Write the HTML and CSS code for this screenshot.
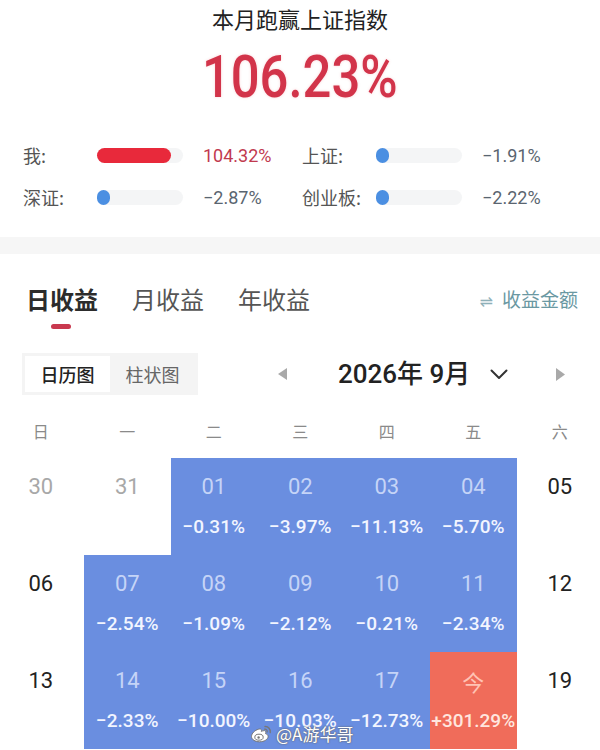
FILE: index.html
```html
<!DOCTYPE html>
<html lang="zh-CN">
<head>
<meta charset="utf-8">
<title>本月跑赢上证指数</title>
<link rel="stylesheet" href="styles.css">
</head>
<body>
<div class="summary">
  <div class="title">本月跑赢上证指数</div>
  <div class="big"><span>106.23%</span></div>
  <div class="stats">
    <div class="stat"><span class="label">我:</span><span class="track"><span class="fill red" style="width:74px"></span></span><span class="value up">104.32%</span></div>
    <div class="stat"><span class="label">上证:</span><span class="track"><span class="fill blue" style="width:13px"></span></span><span class="value">−1.91%</span></div>
    <div class="stat"><span class="label">深证:</span><span class="track"><span class="fill blue" style="width:13px"></span></span><span class="value">−2.87%</span></div>
    <div class="stat"><span class="label">创业板:</span><span class="track"><span class="fill blue" style="width:13px"></span></span><span class="value">−2.22%</span></div>
  </div>
</div>
<div class="band"></div>
<div class="tabs">
  <div class="tab active">日收益<i class="indicator"></i></div>
  <div class="tab">月收益</div>
  <div class="tab">年收益</div>
  <div class="toggle"><span class="swap">⇌</span>收益金额</div>
</div>
<div class="controls">
  <div class="seg"><span class="on">日历图</span><span>柱状图</span></div>
  <div class="nav">
    <svg class="tri" width="9" height="12" viewBox="0 0 9 12"><polygon points="9,0 9,12 0,6" fill="#a9a9a9"/></svg>
    <span class="month">2026年 9月</span>
    <svg class="chev" width="18" height="11" viewBox="0 0 18 11"><polyline points="1.5,1.5 9,9 16.5,1.5" fill="none" stroke="#333" stroke-width="2" stroke-linecap="round" stroke-linejoin="round"/></svg>
    <svg class="tri right" width="9" height="13" viewBox="0 0 9 13"><polygon points="0,0 9,6.5 0,13" fill="#a9a9a9"/></svg>
  </div>
</div>
<div class="weekdays">
  <span>日</span><span>一</span><span>二</span><span>三</span><span>四</span><span>五</span><span>六</span>
</div>
<div class="cal">
  <div class="cell prev"><b>30</b></div>
  <div class="cell prev"><b>31</b></div>
  <div class="cell loss"><b>01</b><em>−0.31%</em></div>
  <div class="cell loss"><b>02</b><em>−3.97%</em></div>
  <div class="cell loss"><b>03</b><em>−11.13%</em></div>
  <div class="cell loss"><b>04</b><em>−5.70%</em></div>
  <div class="cell"><b>05</b></div>

  <div class="cell"><b>06</b></div>
  <div class="cell loss"><b>07</b><em>−2.54%</em></div>
  <div class="cell loss"><b>08</b><em>−1.09%</em></div>
  <div class="cell loss"><b>09</b><em>−2.12%</em></div>
  <div class="cell loss"><b>10</b><em>−0.21%</em></div>
  <div class="cell loss"><b>11</b><em>−2.34%</em></div>
  <div class="cell"><b>12</b></div>

  <div class="cell"><b>13</b></div>
  <div class="cell loss"><b>14</b><em>−2.33%</em></div>
  <div class="cell loss"><b>15</b><em>−10.00%</em></div>
  <div class="cell loss"><b>16</b><em>−10.03%</em></div>
  <div class="cell loss"><b>17</b><em>−12.73%</em></div>
  <div class="cell today"><b>今</b><em>+301.29%</em></div>
  <div class="cell"><b>19</b></div>
</div>
<div class="watermark">
  <svg width="22" height="18" viewBox="0 0 22 18">
    <path d="M8.5 4.2c-3.6 1-7 4.2-7 7.3 0 3 3.6 5.3 8 5.3 4.9 0 8.6-2.6 8.6-5.3 0-1.8-1.600-2.6-2.6-2.9 .5-1.2 .6-2.8-1-3-1.1-.1-2.6 .6-3.2 .8 .4-1.2 .4-3-2.8-2.2z" fill="#fff" stroke="#777" stroke-width="1"/>
    <ellipse cx="9" cy="12.2" rx="4.2" ry="3" fill="none" stroke="#777" stroke-width="1"/>
    <circle cx="8.6" cy="12.5" r="1.2" fill="#777"/>
    <path d="M15 1.5a5 5 0 0 1 5.2 6" fill="none" stroke="#777" stroke-width="1.4" stroke-linecap="round"/>
    <path d="M14.6 4.2a2.3 2.3 0 0 1 2.6 2.8" fill="none" stroke="#777" stroke-width="1.2" stroke-linecap="round"/>
  </svg>
  <span>@A游华哥</span>
</div>
</body>
</html>
```
FILE: styles.css
```css
html, body {
  margin: 0;
  padding: 0;
  overflow: hidden;
  background: #fff;
}
body {
  position: relative;
  width: 600px;
  height: 750px;
  font-family: "Roboto", "Noto Sans CJK SC", sans-serif;
  color: #222;
}
.summary {
  padding-top: 4px;
}
.title {
  text-align: center;
  font-family: "Noto Sans CJK SC", sans-serif;
  font-size: 22px;
  line-height: 28px;
  color: #222;
}
.big {
  margin-top: 10px;
  text-align: center;
  line-height: 70px;
  height: 70px;
}
.big span {
  display: inline-block;
  font-size: 59px;
  font-weight: 500;
  color: #d2344a;
  transform: scaleX(0.86);
  text-shadow: 0 0 3px rgba(230, 80, 90, 0.25);
}
.stats {
  margin-top: 22px;
  padding-left: 23px;
  display: grid;
  grid-template-columns: 279px 1fr;
}
.stat {
  display: flex;
  align-items: center;
  height: 42px;
}
.label {
  width: 74px;
  font-family: "Noto Sans CJK SC", sans-serif;
  font-size: 18px;
  color: #555;
}
.track {
  display: block;
  width: 86px;
  height: 15px;
  border-radius: 8px;
  background: #f4f5f6;
}
.fill {
  display: block;
  height: 15px;
  border-radius: 8px;
}
.fill.red { background: #e8293b; }
.fill.blue { background: #4b8fe2; }
.value {
  margin-left: 20px;
  font-size: 18px;
  color: #5a6570;
}
.value.up { color: #c13a4f; }
.band {
  margin-top: 19px;
  height: 17px;
  background: #f6f6f6;
}
.tabs {
  display: flex;
  align-items: flex-start;
  padding: 29px 22px 0 26px;
  gap: 34px;
}
.tab {
  display: flex;
  flex-direction: column;
  align-items: center;
  font-family: "Noto Sans CJK SC", sans-serif;
  font-size: 24px;
  line-height: 32px;
  color: #555;
}
.tab.active {
  font-weight: 700;
  color: #2c2c2c;
}
.indicator {
  display: block;
  width: 20px;
  height: 5px;
  margin-top: 9px;
  margin-right: 3px;
  border-radius: 3px;
  background: #c9394f;
}
.toggle {
  margin-left: auto;
  font-family: "Noto Sans CJK SC", sans-serif;
  font-size: 19px;
  line-height: 32px;
  color: #6a98a2;
}
.swap {
  font-family: "DejaVu Sans", sans-serif;
  font-size: 16px;
  margin-right: 9px;
  color: #8fb0b8;
}
.controls {
  display: flex;
  align-items: center;
  height: 42px;
  margin-top: 24px;
}
.seg {
  display: flex;
  margin-left: 22px;
  padding: 3px;
  background: #f4f4f4;
}
.seg span {
  display: flex;
  align-items: center;
  justify-content: center;
  width: 85px;
  height: 36px;
  font-family: "Noto Sans CJK SC", sans-serif;
  font-size: 18px;
  color: #666;
}
.seg span.on {
  background: #fff;
  color: #222;
  font-weight: 500;
}
.nav {
  display: flex;
  align-items: center;
  margin-left: 80px;
}
.month {
  margin-left: 51px;
  font-size: 26px;
  font-weight: 500;
  color: #222;
  line-height: 34px;
}
.chev { margin-left: 20px; }
.tri.right { margin-left: 48px; }
.weekdays, .cal {
  display: grid;
  grid-template-columns: repeat(7, 86.5px);
  margin-left: -2.5px;
  width: 605.5px;
}
.weekdays {
  padding: 24px 0 15px;
  line-height: 24px;
}
.weekdays span {
  text-align: center;
  font-family: "Noto Sans CJK SC", sans-serif;
  font-size: 16px;
  font-weight: 400;
  color: #8a8a8a;
}
.cal {
  grid-auto-rows: 97px;
}
.cell {
  display: flex;
  flex-direction: column;
  align-items: center;
  padding-top: 14px;
  box-sizing: border-box;
}
.cell b {
  font-weight: 400;
  font-size: 22px;
  line-height: 30px;
  color: #222;
}
.cell.prev b { color: #a8a8a8; }
.cell em {
  font-style: normal;
  font-weight: 500;
  font-size: 19px;
  line-height: 24px;
  margin-top: 13px;
  color: #f2f5ff;
}
.cell.loss { background: #6a8ee0; }
.cell.loss b { color: #c5d4f7; }
.cell.today { background: #f06c5a; }
.cell.today b {
  font-family: "Noto Sans CJK SC", sans-serif;
  color: #ffc3b5;
}
.cell.today em { color: #ffe6df; }
.watermark {
  position: absolute;
  left: 250px;
  top: 721px;
  display: flex;
  align-items: center;
  gap: 4px;
}
.watermark span {
  font-family: "Noto Sans CJK SC", sans-serif;
  font-size: 17px;
  color: #fff;
  text-shadow: 0 0 1px #666, 0 0 2px #666;
}
```
